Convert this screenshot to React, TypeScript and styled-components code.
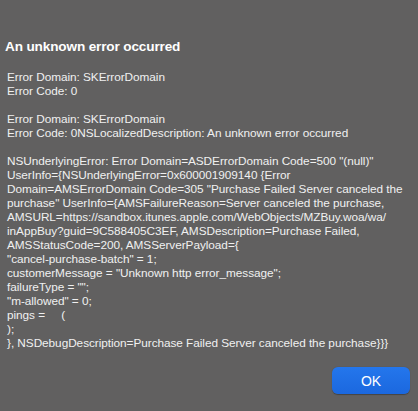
import styled, { createGlobalStyle } from "styled-components";

const Global = createGlobalStyle`
  html, body {
    margin: 0;
    padding: 0;
    background: #616060;
  }
  #root {
    height: 411px;
  }
`;

const Dialog = styled.div`
  width: 418px;
  height: 411px;
  box-sizing: border-box;
  padding-top: 38px;
  background: #616060;
  display: flex;
  flex-direction: column;
  font-family: "Liberation Sans", Arial, sans-serif;
  color: #f2f2f2;
`;

const Title = styled.h1`
  margin: 0 0 14px;
  padding-left: 5px;
  font-size: 13.6px;
  letter-spacing: -0.15px;
  line-height: 18px;
  font-weight: bold;
  color: #ffffff;
`;

const Message = styled.div`
  padding-left: 7px;
  font-size: 11.8px;
  letter-spacing: -0.05px;
  line-height: 14px;
  white-space: pre;
  color: #f0f0f0;
`;

const Footer = styled.div`
  display: flex;
  justify-content: flex-end;
  padding: 17px 8px 0 0;
`;

const OkButton = styled.button`
  width: 78px;
  height: 27px;
  border: none;
  border-radius: 6px;
  background: linear-gradient(#2476ec, #1b68df);
  color: #fff;
  font-family: "Liberation Sans", Arial, sans-serif;
  font-size: 14px;
  font-weight: 500;
  cursor: pointer;
  box-shadow: 0 0.5px 1px rgba(0, 0, 0, 0.3);
`;

const lines = [
  "Error Domain: SKErrorDomain",
  "Error Code: 0",
  "",
  "Error Domain: SKErrorDomain",
  "Error Code: 0NSLocalizedDescription: An unknown error occurred",
  "",
  'NSUnderlyingError: Error Domain=ASDErrorDomain Code=500 "(null)"',
  "UserInfo={NSUnderlyingError=0x600001909140 {Error",
  'Domain=AMSErrorDomain Code=305 "Purchase Failed Server canceled the',
  'purchase" UserInfo={AMSFailureReason=Server canceled the purchase,',
  "AMSURL=https://sandbox.itunes.apple.com/WebObjects/MZBuy.woa/wa/",
  "inAppBuy?guid=9C588405C3EF, AMSDescription=Purchase Failed,",
  "AMSStatusCode=200, AMSServerPayload={",
  '"cancel-purchase-batch" = 1;',
  'customerMessage = "Unknown http error_message";',
  'failureType = "";',
  '"m-allowed" = 0;',
  "pings =     (",
  ");",
  "}, NSDebugDescription=Purchase Failed Server canceled the purchase}}}",
];

export default function App() {
  return (
    <>
      <Global />
      <Dialog>
        <Title>An unknown error occurred</Title>
        <Message>{lines.join("\n")}</Message>
        <Footer>
          <OkButton type="button">OK</OkButton>
        </Footer>
      </Dialog>
    </>
  );
}
